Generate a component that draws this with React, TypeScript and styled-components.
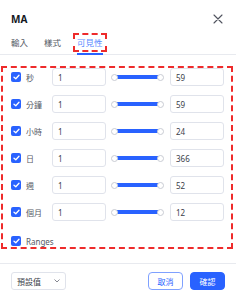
import styled, { createGlobalStyle } from "styled-components";

const GlobalStyle = createGlobalStyle`
  * { box-sizing: border-box; }
  body {
    margin: 0;
    background: #ffffff;
    font-family: "Noto Sans", "Noto Sans CJK TC", sans-serif;
    color: #131722;
  }
`;

const Dialog = styled.div`
  width: 236px;
  height: 300px;
  background: #ffffff;
  display: flex;
  flex-direction: column;
`;

const Header = styled.div`
  height: 33px;
  padding: 4px 11px 0;
  display: flex;
  align-items: center;
  justify-content: space-between;
`;

const Title = styled.div`
  font-size: 10px;
  font-weight: 700;
  color: #131722;
`;

const CloseButton = styled.div`
  width: 12px;
  height: 12px;
  display: flex;
  align-items: center;
  justify-content: center;
  margin-right: 1px;
`;

const Tabs = styled.div`
  height: 22px;
  padding: 0 11px;
  display: flex;
  align-items: flex-start;
  gap: 16px;
  border-bottom: 1px solid #e8eaef;
`;

const Tab = styled.div<{ $active?: boolean }>`
  height: 22px;
  margin-bottom: -1px;
  display: flex;
  align-items: center;
  padding-bottom: 2px;
  border-bottom: 2px solid ${(p) => (p.$active ? "#2962ff" : "transparent")};
  font-size: 8.5px;
  color: ${(p) => (p.$active ? "#5b8cff" : "#555a66")};
`;

const Marked = styled.span`
  display: inline-block;
  line-height: 11px;
  outline: 2px dashed #ee2b2b;
  outline-offset: 2px;
`;

const Content = styled.div`
  margin: 11px 3px 0 1px;
  border: 2px dashed #ee2b2b;
  border-top-width: 2px;
  padding: 0 7px 0 8px;
  display: flex;
  flex-direction: column;
  gap: 9px;
`;

const Row = styled.div<{ $short?: boolean }>`
  height: ${(p) => (p.$short ? "12px" : "18px")};
  margin-top: ${(p) => (p.$short ? "5px" : "0")};
  display: flex;
  align-items: center;
`;

const Check = styled.div`
  width: 10px;
  height: 10px;
  border-radius: 2px;
  background: #2962ff;
  display: flex;
  align-items: center;
  justify-content: center;
  margin-right: 5px;
  flex-shrink: 0;
`;

const Label = styled.div`
  width: 26px;
  font-size: 8px;
  color: #555a66;
  white-space: nowrap;
`;

const NumberInput = styled.div`
  width: 54px;
  height: 18px;
  border: 1px solid #e0e3eb;
  border-radius: 3px;
  padding-left: 5px;
  display: flex;
  align-items: center;
  font-size: 8px;
  color: #3a3e4a;
`;

const Slider = styled.div`
  position: relative;
  width: 53px;
  height: 8px;
  margin: 0 6px 0 5px;
  display: flex;
  align-items: center;
`;

const Track = styled.div`
  flex: 1;
  height: 4px;
  margin: 0 2px;
  background: #2962ff;
`;

const Handle = styled.div<{ $side: "left" | "right" }>`
  position: absolute;
  top: 0.5px;
  ${(p) => p.$side}: 0;
  width: 7px;
  height: 7px;
  border-radius: 50%;
  background: #ffffff;
  border: 1px solid #c9ccd3;
`;

const Footer = styled.div`
  margin-top: 14px;
  border-top: 1px solid #e8eaef;
  padding: 8px 11px 0;
  display: flex;
  align-items: center;
  justify-content: space-between;
`;

const Select = styled.div`
  width: 55px;
  height: 18px;
  border: 1px solid #e0e3eb;
  border-radius: 3px;
  padding: 0 5px;
  display: flex;
  align-items: center;
  justify-content: space-between;
  font-size: 8px;
  color: #3a3e4a;
`;

const Buttons = styled.div`
  display: flex;
  gap: 7px;
`;

const Button = styled.div<{ $primary?: boolean }>`
  width: 35px;
  height: 18px;
  border-radius: 4px;
  display: flex;
  align-items: center;
  justify-content: center;
  font-size: 8px;
  border: 1px solid ${(p) => (p.$primary ? "#2962ff" : "#7fa1ff")};
  background: ${(p) => (p.$primary ? "#2962ff" : "#ffffff")};
  color: ${(p) => (p.$primary ? "#ffffff" : "#2962ff")};
`;

const rows = [
  { label: "秒", min: 1, max: 59 },
  { label: "分鐘", min: 1, max: 59 },
  { label: "小時", min: 1, max: 24 },
  { label: "日", min: 1, max: 366 },
  { label: "週", min: 1, max: 52 },
  { label: "個月", min: 1, max: 12 },
];

function CheckMark() {
  return (
    <svg width="7" height="6" viewBox="0 0 7 6">
      <path d="M1 3.2 L2.8 4.8 L6 1.2" fill="none" stroke="#ffffff" strokeWidth="1.3" strokeLinecap="round" strokeLinejoin="round" />
    </svg>
  );
}

export default function App() {
  return (
    <>
      <GlobalStyle />
      <Dialog>
        <Header>
          <Title>MA</Title>
          <CloseButton>
            <svg width="10" height="10" viewBox="0 0 10 10">
              <path d="M1 1 L9 9 M9 1 L1 9" stroke="#50535e" strokeWidth="1.1" strokeLinecap="round" />
            </svg>
          </CloseButton>
        </Header>
        <Tabs>
          <Tab>輸入</Tab>
          <Tab>樣式</Tab>
          <Tab $active>
            <Marked>可見性</Marked>
          </Tab>
        </Tabs>
        <Content>
          {rows.map((r) => (
            <Row key={r.label}>
              <Check>
                <CheckMark />
              </Check>
              <Label>{r.label}</Label>
              <NumberInput>{r.min}</NumberInput>
              <Slider>
                <Track />
                <Handle $side="left" />
                <Handle $side="right" />
              </Slider>
              <NumberInput>{r.max}</NumberInput>
            </Row>
          ))}
          <Row $short>
            <Check>
              <CheckMark />
            </Check>
            <Label>Ranges</Label>
          </Row>
        </Content>
        <Footer>
          <Select>
            預設值
            <svg width="6" height="4" viewBox="0 0 6 4">
              <path d="M0.5 0.5 L3 3 L5.5 0.5" fill="none" stroke="#787b86" strokeWidth="0.9" />
            </svg>
          </Select>
          <Buttons>
            <Button>取消</Button>
            <Button $primary>確認</Button>
          </Buttons>
        </Footer>
      </Dialog>
    </>
  );
}
